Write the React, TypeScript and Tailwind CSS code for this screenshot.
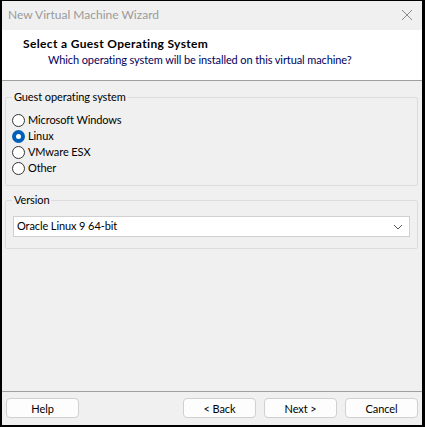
import React from "react";

const font = { fontFamily: 'Lato, "Liberation Sans", sans-serif' };

function Radio({ label, checked }: { label: string; checked?: boolean }) {
  return (
    <label className="flex items-center h-[16px] text-[11px] tracking-[-0.1px] text-black">
      {checked ? (
        <span className="w-[13px] h-[13px] rounded-full bg-[#005fb8] flex items-center justify-center mr-[3px]">
          <span className="w-[5px] h-[5px] rounded-full bg-white" />
        </span>
      ) : (
        <span className="w-[13px] h-[13px] rounded-full border border-[#333] bg-white mr-[3px]" />
      )}
      <span>{label}</span>
    </label>
  );
}

function Btn({ children, className = "" }: { children: React.ReactNode; className?: string }) {
  return (
    <button className={`w-[73px] h-[20px] rounded-[4px] border border-[#d0d0d0] bg-[#fdfdfd] text-[11px] tracking-[-0.1px] text-black leading-none ${className}`}>
      {children}
    </button>
  );
}

function Group({ title, children, className = "" }: { title: string; children: React.ReactNode; className?: string }) {
  return (
    <fieldset className={`border border-[#dcdcdc] rounded-[2px] ml-[3px] mr-[4px] ${className}`}>
      <legend className="px-[2px] text-[11px] tracking-[-0.1px] text-black leading-[14px]">{title}</legend>
      {children}
    </fieldset>
  );
}

export default function App() {
  return (
    <div className="w-[425px] h-[427px] bg-black pl-[2px] pr-[3px] pt-[1px] pb-[2px]" style={font}>
      <div className="w-full h-full bg-[#f0f0f0] flex flex-col">
        {/* title bar */}
        <div className="h-[29px] flex items-center justify-between pl-[6px] pr-[8px]">
          <span className="text-[12px] text-[#9a9a9a] mt-[-2px]">New Virtual Machine Wizard</span>
          <svg width="12" height="12" viewBox="0 0 12 12" className="mr-[1px] mt-[-2px]">
            <path d="M1 1 L11 11 M11 1 L1 11" stroke="#8a8a8a" strokeWidth="1" />
          </svg>
        </div>
        {/* header */}
        <div className="h-[51px] bg-white border-b border-[#a0a0a0] pt-[6px] pl-[21px]">
          <div className="text-[12px] font-bold tracking-[0.35px] text-black leading-[16px]">Select a Guest Operating System</div>
          <div className="text-[11px] tracking-[-0.1px] text-[#000060] leading-[16px] pl-[25px]">
            Which operating system will be installed on this virtual machine?
          </div>
        </div>
        {/* body */}
        <div className="flex-1 flex flex-col pt-[9px]">
          <Group title="Guest operating system" className="h-[96px] pt-[8px] px-[6px]">
            <div className="flex flex-col">
              <Radio label="Microsoft Windows" />
              <Radio label="Linux" checked />
              <Radio label="VMware ESX" />
              <Radio label="Other" />
            </div>
          </Group>
          <Group title="Version" className="h-[56px] mt-[7px] pt-[9px] pl-[6px] pr-[7px]">
            <div className="ml-[1px] h-[21px] border border-[#d0d0d0] bg-white flex items-center justify-between pl-[3px] pr-[6px]">
              <span className="text-[11px] tracking-[-0.1px] text-black">Oracle Linux 9 64-bit</span>
              <svg width="10" height="6" viewBox="0 0 10 6">
                <path d="M1 1 L5 5 L9 1" stroke="#555" strokeWidth="1" fill="none" />
              </svg>
            </div>
          </Group>
        </div>
        {/* footer */}
        <div className="h-[34px] border-t border-[#a0a0a0] flex items-center px-[4px] pb-[1px]">
          <Btn>Help</Btn>
          <div className="flex-1" />
          <div className="flex gap-[8px]">
            <Btn>&lt; Back</Btn>
            <Btn>Next &gt;</Btn>
            <Btn>Cancel</Btn>
          </div>
        </div>
      </div>
    </div>
  );
}
